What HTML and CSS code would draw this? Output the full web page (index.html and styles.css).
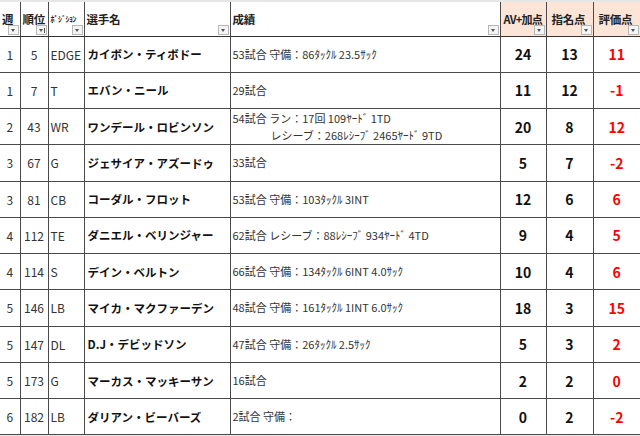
FILE: index.html
```html
<!DOCTYPE html>
<html lang="ja">
<head>
<meta charset="utf-8">
<link rel="stylesheet" href="styles.css">
</head>
<body>
<div class="sheet">
<table class="grid">
<colgroup>
<col class="c-week"><col class="c-rank"><col class="c-pos"><col class="c-name"><col class="c-res"><col class="c-av"><col class="c-pick"><col class="c-eval">
</colgroup>
<thead>
<tr>
<th class="h"><span class="lbl">週</span><span class="flt"></span></th>
<th class="h"><span class="lbl">順位</span><span class="flt sort"></span></th>
<th class="h"><span class="lbl small">ﾎﾟｼﾞｼｮﾝ</span><span class="flt"></span></th>
<th class="h"><span class="lbl">選手名</span><span class="flt"></span></th>
<th class="h"><span class="lbl">成績</span><span class="flt"></span></th>
<th class="h peach"><span class="lbl tight">AV+加点</span><span class="flt"></span></th>
<th class="h peach"><span class="lbl wide">指名点</span><span class="flt"></span></th>
<th class="h peach"><span class="lbl wide">評価点</span><span class="flt"></span></th>
</tr>
</thead>
<tbody>
<tr><td class="num">1</td><td class="num">5</td><td class="pos">EDGE</td><td class="name">カイボン・ティボドー</td><td class="res">53試合 守備：86ﾀｯｸﾙ 23.5ｻｯｸ</td><td class="pt">24</td><td class="pt">13</td><td class="pt red">11</td></tr>
<tr><td class="num">1</td><td class="num">7</td><td class="pos">T</td><td class="name">エバン・ニール</td><td class="res">29試合</td><td class="pt">11</td><td class="pt">12</td><td class="pt red">-1</td></tr>
<tr><td class="num">2</td><td class="num">43</td><td class="pos">WR</td><td class="name">ワンデール・ロビンソン</td><td class="res"><div>54試合 ラン：17回 109ﾔｰﾄﾞ 1TD</div><div class="indent">レシーブ：268ﾚｼｰﾌﾞ 2465ﾔｰﾄﾞ 9TD</div></td><td class="pt">20</td><td class="pt">8</td><td class="pt red">12</td></tr>
<tr><td class="num">3</td><td class="num">67</td><td class="pos">G</td><td class="name">ジェサイア・アズードゥ</td><td class="res">33試合</td><td class="pt">5</td><td class="pt">7</td><td class="pt red">-2</td></tr>
<tr><td class="num">3</td><td class="num">81</td><td class="pos">CB</td><td class="name">コーダル・フロット</td><td class="res">53試合 守備：103ﾀｯｸﾙ 3INT</td><td class="pt">12</td><td class="pt">6</td><td class="pt red">6</td></tr>
<tr><td class="num">4</td><td class="num">112</td><td class="pos">TE</td><td class="name">ダニエル・ベリンジャー</td><td class="res">62試合 レシーブ：88ﾚｼｰﾌﾞ 934ﾔｰﾄﾞ 4TD</td><td class="pt">9</td><td class="pt">4</td><td class="pt red">5</td></tr>
<tr><td class="num">4</td><td class="num">114</td><td class="pos">S</td><td class="name">デイン・ベルトン</td><td class="res">66試合 守備：134ﾀｯｸﾙ 6INT 4.0ｻｯｸ</td><td class="pt">10</td><td class="pt">4</td><td class="pt red">6</td></tr>
<tr><td class="num">5</td><td class="num">146</td><td class="pos">LB</td><td class="name">マイカ・マクファーデン</td><td class="res">48試合 守備：161ﾀｯｸﾙ 1INT 6.0ｻｯｸ</td><td class="pt">18</td><td class="pt">3</td><td class="pt red">15</td></tr>
<tr><td class="num">5</td><td class="num">147</td><td class="pos">DL</td><td class="name">D.J・デビッドソン</td><td class="res">47試合 守備：26ﾀｯｸﾙ 2.5ｻｯｸ</td><td class="pt">5</td><td class="pt">3</td><td class="pt red">2</td></tr>
<tr><td class="num">5</td><td class="num">173</td><td class="pos">G</td><td class="name">マーカス・マッキーサン</td><td class="res">16試合</td><td class="pt">2</td><td class="pt">2</td><td class="pt red">0</td></tr>
<tr><td class="num">6</td><td class="num">182</td><td class="pos">LB</td><td class="name">ダリアン・ビーバーズ</td><td class="res">2試合 守備：</td><td class="pt">0</td><td class="pt">2</td><td class="pt red">-2</td></tr>
</tbody>
</table>
</div>
</body>
</html>
```
FILE: styles.css
```css
html, body {
  margin: 0;
  padding: 0;
  background: #ffffff;
}
body {
  font-family: "Noto Sans CJK JP", "Noto Sans", sans-serif;
  color: #222;
}
.sheet {
  width: 640px;
  height: 436px;
  overflow: hidden;
  background: #e6e6e6;
  padding-top: 2px;
  box-sizing: border-box;
}
.grid {
  width: 640px;
  table-layout: fixed;
  border-collapse: collapse;
  background: #fff;
}
.c-week { width: 20px; }
.c-rank { width: 28px; }
.c-pos { width: 36px; }
.c-name { width: 146px; }
.c-res { width: 270px; }
.c-av { width: 46px; }
.c-pick { width: 47px; }
.c-eval { width: 47px; }

.grid th, .grid td {
  border-left: 1px solid #4a4a4a;
  border-right: 1px solid #4a4a4a;
  border-bottom: 1px solid #4a4a4a;
  padding: 0;
  overflow: hidden;
  white-space: nowrap;
}
.grid th:first-child, .grid td:first-child { border-left: none; }
.grid th:last-child, .grid td:last-child { border-right: none; }

thead tr { height: 34px; }
.grid th {
  position: relative;
  text-align: left;
  vertical-align: top;
  font-weight: 700;
  font-size: 11.5px;
  background: #fff;
  border-bottom: 1px solid #333;
}
.grid th.peach { background: #fce4d6; }
.lbl {
  display: block;
  padding: 9px 0 0 2px;
  line-height: 16px;
  letter-spacing: -0.2px;
}
.lbl.tight {
  padding-left: 3px;
  letter-spacing: -0.7px;
  font-size: 11px;
}
.lbl.wide { padding-left: 5px; }
.lbl.small {
  font-size: 8px;
  font-weight: 700;
  letter-spacing: -0.5px;
}
.flt {
  position: absolute;
  right: 1px;
  bottom: 1px;
  width: 11px;
  height: 10px;
  border: 1px solid #b8b8b8;
  background: #f4f4f4;
  box-sizing: border-box;
}
.flt::after {
  content: "";
  position: absolute;
  left: 2px;
  top: 3px;
  border-left: 2.5px solid transparent;
  border-right: 2.5px solid transparent;
  border-top: 3px solid #555;
}
.flt.sort::before {
  content: "";
  position: absolute;
  right: 1px;
  top: 2px;
  width: 1px;
  height: 5px;
  background: #555;
}

tbody tr { height: 36.27px; }
.grid td { vertical-align: middle; }
.num {
  text-align: center;
  font-size: 12px;
  color: #333;
}
.pos {
  font-size: 12px;
  color: #333;
  padding-left: 2px !important;
}
.name {
  font-weight: 700;
  font-size: 11.5px;
  padding-left: 3px !important;
  color: #111;
}
.res {
  font-size: 11px;
  color: #333;
  padding-left: 2px !important;
  line-height: 17px;
}
.indent { padding-left: 38px; }
.pt {
  text-align: center;
  font-weight: 700;
  font-size: 14px;
  color: #111;
}
.pt.red { color: #ff0000; }
```
